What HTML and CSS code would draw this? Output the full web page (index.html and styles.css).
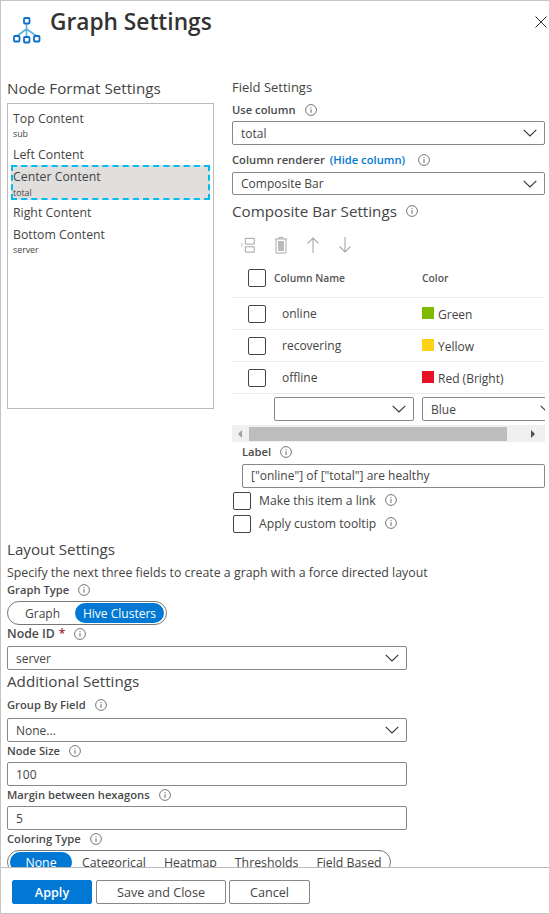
FILE: index.html
```html
<!DOCTYPE html>
<html lang="en">
<head>
<meta charset="utf-8">
<title>Graph Settings</title>
<link rel="stylesheet" href="styles.css">
</head>
<body>
<svg class="defs" width="0" height="0" aria-hidden="true">
  <symbol id="info" viewBox="0 0 12 12"><circle cx="6" cy="6" r="5.4" fill="none" stroke="#666" stroke-width=".9"/><path d="M6 5.2v3.6M6 3.2v1" stroke="#666" stroke-width="1" fill="none"/></symbol>
  <symbol id="chev" viewBox="0 0 14 8"><path d="M.7.8 7 7l6.300-6.200" fill="none" stroke="#333" stroke-width="1.100"/></symbol>
</svg>
<div class="panel">
  <header class="head">
    <svg class="logo" viewBox="0 0 30 30" width="30" height="30">
      <path d="M14.500 8v9M14.500 13 5 20M14.500 13l10 7M14.500 13v7" stroke="#59b4d9" stroke-width="1.600" fill="none"/>
      <g fill="#fff" stroke="#0f6fc6" stroke-width="1.800"><rect x="12" y="2" width="5.500" height="5.500" rx="1"/><rect x="2" y="20" width="5.500" height="5.500" rx="1"/><rect x="12" y="21" width="5.500" height="5.500" rx="1"/><rect x="22" y="20" width="5.500" height="5.500" rx="1"/></g>
    </svg>
    <h1 class="title">Graph Settings</h1>
    <svg class="close" viewBox="0 0 12 12" width="12" height="12"><path d="M.5.5l11 11M11.500.5l-11 11" stroke="#333" stroke-width="1" fill="none"/></svg>
  </header>
  <main class="body">
    <div class="top">
      <section class="left">
        <h2 class="h2 nodehead">Node Format Settings</h2>
        <div class="list">
          <div class="item"><div class="name">Top Content</div><div class="sub">sub</div></div>
          <div class="item"><div class="name">Left Content</div></div>
          <div class="item sel"><div class="name">Center Content</div><div class="sub">total</div></div>
          <div class="item tight"><div class="name">Right Content</div></div>
          <div class="item"><div class="name">Bottom Content</div><div class="sub">server</div></div>
        </div>
      </section>
      <section class="right">
        <div class="fieldhead">Field Settings</div>
        <div class="lab">Use column <svg class="i"><use href="#info"/></svg></div>
        <div class="field">total<svg class="chev"><use href="#chev"/></svg></div>
        <div class="lab lab2">Column renderer <a class="link">(Hide column)</a> <svg class="i i2"><use href="#info"/></svg></div>
        <div class="field renderer">Composite Bar<svg class="chev"><use href="#chev"/></svg></div>
        <h2 class="h2 comphead">Composite Bar Settings <svg class="i"><use href="#info"/></svg></h2>
        <div class="tools">
          <svg viewBox="0 0 18 18" width="16" height="16"><path d="M1 7l2 2-2 2" fill="none" stroke="#aaa"/><path d="M6 1.500h10v6.500H6zM6 11h10v6H6z" fill="none" stroke="#999"/></svg>
          <svg viewBox="0 0 14 18" width="14" height="18"><path d="M1 3h12M5 3V1.500h4V3M2 3v14h10V3" fill="none" stroke="#aaa"/><path d="M4 5h6v10H4z" fill="#bbb"/></svg>
          <svg viewBox="0 0 14 18" width="14" height="18"><path d="M7 17V2M1.500 7.500 7 2l5.500 5.500" fill="none" stroke="#aaa" stroke-width="1.100"/></svg>
          <svg viewBox="0 0 14 18" width="14" height="18"><path d="M7 1v15M1.500 10.500 7 16l5.500-5.500" fill="none" stroke="#aaa" stroke-width="1.100"/></svg>
        </div>
        <div class="table">
          <div class="row hdr"><span class="cb"></span><span class="c1">Column Name</span><span class="c2">Color</span></div>
          <div class="row"><span class="cb"></span><span class="c1 cell">online</span><span class="c2 colr"><i class="sw green"></i>Green</span></div>
          <div class="row"><span class="cb"></span><span class="c1 cell">recovering</span><span class="c2 colr"><i class="sw yellow"></i>Yellow</span></div>
          <div class="row"><span class="cb"></span><span class="c1 cell">offline</span><span class="c2 colr"><i class="sw red"></i>Red (Bright)</span></div>
          <div class="addrow">
            <div class="field f1"><svg class="chev"><use href="#chev"/></svg></div>
            <div class="field f2">Blue<svg class="chev"><use href="#chev"/></svg></div>
          </div>
        </div>
        <div class="scroll"><span class="arr al"></span><span class="thumb"></span><span class="arr ar"></span></div>
        <div class="labelblock">
          <div class="lab lab3">Label <svg class="i"><use href="#info"/></svg></div>
          <div class="field">["online"] of ["total"] are healthy</div>
        </div>
        <div class="chk first"><span class="cb"></span>Make this item a link <svg class="i"><use href="#info"/></svg></div>
        <div class="chk"><span class="cb"></span>Apply custom tooltip <svg class="i"><use href="#info"/></svg></div>
      </section>
    </div>
    <section class="bottom">
      <h2 class="h2 layouthead">Layout Settings</h2>
      <div class="desc">Specify the next three fields to create a graph with a force directed layout</div>
      <div class="lab lab4">Graph Type <svg class="i"><use href="#info"/></svg></div>
      <div class="toggle"><span class="opt">Graph</span><span class="opt on">Hive Clusters</span></div>
      <div class="lab lab5">Node ID <b class="req">*</b> <svg class="i"><use href="#info"/></svg></div>
      <div class="field wide">server<svg class="chev"><use href="#chev"/></svg></div>
      <h2 class="h2 addhead">Additional Settings</h2>
      <div class="lab lab6">Group By Field <svg class="i"><use href="#info"/></svg></div>
      <div class="field wide grp">None...<svg class="chev"><use href="#chev"/></svg></div>
      <div class="lab lab7">Node Size <svg class="i"><use href="#info"/></svg></div>
      <div class="field wide num">100</div>
      <div class="lab lab7">Margin between hexagons <svg class="i"><use href="#info"/></svg></div>
      <div class="field wide num">5</div>
      <div class="lab lab7">Coloring Type <svg class="i"><use href="#info"/></svg></div>
      <div class="toggle t2"><span class="opt on">None</span><span class="opt">Categorical</span><span class="opt">Heatmap</span><span class="opt">Thresholds</span><span class="opt">Field Based</span></div>
    </section>
  </main>
  <footer class="foot">
    <button class="btn primary">Apply</button>
    <button class="btn save">Save and Close</button>
    <button class="btn cancel">Cancel</button>
  </footer>
</div>
</body>
</html>
```
FILE: styles.css
```css
* { box-sizing: border-box; }
html, body { margin: 0; height: 100%; overflow: hidden; background: #fff; }
body { font-family: "Open Sans", "Noto Sans", sans-serif; font-size: 12px; color: #444; }
.defs { position: absolute; }
.panel { width: 549px; height: 914px; border: 1px solid #c4c4c4; border-right: 0; display: flex; flex-direction: column; }
.head { height: 61px; flex: none; display: flex; align-items: flex-start; position: relative; padding: 15px 0 0 11px; }
.logo { flex: none; }
.title { margin: -10px 0 0 8px; font-size: 22.700px; line-height: 32px; font-weight: 600; color: #333; }
.close { position: absolute; right: 2px; top: 15px; }
.body { flex: 1; min-height: 0; overflow: hidden; padding: 0 0 0 6px; }
.top { display: grid; grid-template-columns: 207px 313px; column-gap: 18px; }
.h2 { margin: 0; font-weight: 400; font-size: 15.200px; line-height: 20px; color: #444; }
.nodehead { margin-top: 16px; }
.list { border: 1px solid #bbb; height: 306px; margin-top: 5px; padding: 5px 3px 0 5px; }
.item { margin-bottom: 5px; }
.item.tight { margin-bottom: 3px; }
.name { font-size: 12.300px; line-height: 19px; }
.sub { font-size: 8.800px; line-height: 12px; }
.item.sel { background: #e1dfdd; outline: 2px dashed #00bcf2; outline-offset: -2px; height: 35px; margin: -4px 0 3px -2px; padding: 3px 0 0 2px; }
.item.sel .name { line-height: 18px; }
.item.sel .sub { margin-top: 1px; }
.right { padding-top: 16px; }
.fieldhead { font-size: 13px; line-height: 18px; }
.lab { font-size: 11.200px; font-weight: 600; line-height: 15px; color: #4a4a4a; display: flex; align-items: center; margin-top: 6px; }
.lab2 { margin-top: 7px; }
.i { width: 12px; height: 12px; margin-left: 9px; flex: none; }
.i2 { margin-left: 13px; }
.link { color: #0078d4; margin-left: 5px; }
.field { height: 24px; border: 1px solid #8a8886; border-radius: 2px; font-size: 12px; line-height: 22px; padding: 2px 0 0 8px; display: flex; align-items: center; margin-top: 4px; color: #444; background: #fff; overflow: hidden; }
.renderer { height: 23px; margin-top: 5px; padding-top: 0; }
.renderer .chev { margin-top: 0; }
.chev { width: 14px; height: 8px; margin: -2px 7px 0 auto; flex: none; }
.comphead { margin-top: 6px; display: flex; align-items: center; }
.tools { display: flex; align-items: center; gap: 18px; margin: 14px 0 0 8px; height: 20px; }
.table { margin-top: 4px; width: 313px; overflow: hidden; }
.row { height: 32px; display: flex; align-items: center; border-bottom: 1px solid #edebe9; padding-left: 16px; }
.row.hdr { height: 39px; }
.row.hdr .c1, .row.hdr .c2 { font-weight: 600; font-size: 10.300px; color: #555; }
.cb { width: 18px; height: 18px; border: 1px solid #444; border-radius: 2px; flex: none; background: #fff; display: inline-block; }
.c1 { width: 148px; margin-left: 8px; flex: none; }
.cell { padding-left: 8px; font-size: 12px; }
.c2 { flex: none; }
.colr { display: flex; align-items: center; font-size: 12px; padding-top: 2px; }
.sw { width: 12px; height: 12px; margin: -3px 4px 0 0; display: block; }
.green { background: #7fba00; }
.yellow { background: #fcd116; }
.red { background: #e81123; }
.addrow { display: flex; gap: 8px; padding: 3px 0 0 42px; width: 340px; }
.f1 { width: 140px; margin: 0; flex: none; }
.f2 { width: 140px; margin: 0; flex: none; }
.scroll { height: 17px; background: #f0f0f0; margin-top: 4px; display: flex; align-items: center; }
.arr { width: 0; height: 0; border: 4px solid transparent; flex: none; }
.al { border-right-color: #a0a0a0; border-left-width: 0; margin-left: 6px; }
.ar { border-left-color: #505050; border-right-width: 0; margin-left: 24px; }
.thumb { width: 258px; height: 14px; background: #bdbdbd; margin-left: 7px; }
.labelblock { padding-left: 10px; }
.lab3 { margin-top: 2px; }
.labelblock .field { margin-top: 5px; padding-top: 0; }
.chk { display: flex; align-items: center; font-size: 12.200px; margin-top: 5px; height: 18px; padding: 0 0 2px 1px; }
.chk.first { margin-top: 4px; }
.chk .cb { margin: 0 8px -2px 0; }
.bottom { padding-top: 6px; }
.layouthead { line-height: 20px; }
.desc { font-size: 12.350px; line-height: 16px; margin-top: 6px; white-space: nowrap; }
.lab4 { margin-top: 1px; }
.toggle { height: 24px; width: 160px; border: 1px solid #777; border-radius: 12px; margin-top: 4px; display: flex; align-items: center; padding: 0 2px; font-size: 12px; }
.opt { padding: 1px 8px 0; border-radius: 10px; line-height: 20px; height: 20px; text-align: center; white-space: nowrap; }
.opt:first-child { width: 65px; padding: 1px 0 0; }
.opt.on { background: #0078d4; color: #fff; }
.toggle .on:nth-child(2) { width: 89px; padding: 1px 0 0; }
.lab5 { margin-top: 1px; font-size: 12.300px; }
.req { color: #a4262c; margin-left: 4px; font-size: 12px; line-height: 10px; font-weight: 600; }
.wide { width: 400px; margin-top: 5px; }
.grp { margin-top: 6px; }
.num { margin-top: 4px; }
.addhead { margin-top: 1px; }
.lab6 { margin-top: 6px; }
.lab7 { margin-top: 1px; }
.t2 { width: 384px; gap: 18px; padding: 0 0 0 2px; font-size: 12.300px; }
.t2 .opt { padding: 1px 0 0; }
.t2 .opt:first-child { width: 62px; margin-right: -8px; }
.foot { height: 46px; flex: none; border-top: 1px solid #bbb; display: flex; align-items: center; padding: 3px 0 0 11px; }
.btn { height: 24px; font: 400 12.600px "Open Sans", sans-serif; background: #fff; border: 1px solid #8a8886; border-radius: 2px; color: #444; padding: 0; }
.primary { width: 80px; background: #0078d4; border-color: #0078d4; color: #fff; font-weight: 600; }
.save { width: 130px; margin-left: 4px; }
.cancel { width: 81px; margin-left: 3px; }
```
